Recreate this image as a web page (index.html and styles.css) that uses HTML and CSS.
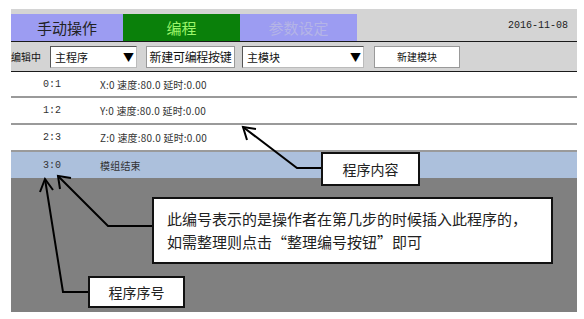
FILE: index.html
```html
<!DOCTYPE html>
<html lang="zh-CN">
<head>
  <meta charset="UTF-8">
  <title>编程</title>
  <link rel="stylesheet" href="styles.css">
</head>
<body>
  <div class="screen">
    <div class="topbar">
      <div class="tab tab-manual">手动操作</div>
      <div class="tab tab-prog">编程</div>
      <div class="tab tab-param">参数设定</div>
      <div class="date">2016-11-08</div>
    </div>
    <div class="toolbar">
      <span class="label">编辑中</span>
      <div class="select sel-main"><span>主程序</span><span class="arrow">▼</span></div>
      <div class="btn btn-key">新建可编程按键</div>
      <div class="select sel-mod"><span>主模块</span><span class="arrow">▼</span></div>
      <div class="btn btn-mod">新建模块</div>
    </div>
    <div class="rows">
      <div class="row"><span class="num">0:1</span><span class="txt">X:0 速度:80.0 延时:0.00</span></div>
      <div class="row"><span class="num">1:2</span><span class="txt">Y:0 速度:80.0 延时:0.00</span></div>
      <div class="row"><span class="num">2:3</span><span class="txt">Z:0 速度:80.0 延时:0.00</span></div>
      <div class="row row-end"><span class="num">3:0</span><span class="txt">模组结束</span></div>
    </div>
    <div class="pane"></div>

    <svg class="arrows" width="566" height="303" viewBox="11 9 566 303">
      <g fill="none" stroke="#000" stroke-width="2" stroke-linejoin="miter">
        <polyline points="321,168 297,168 243,127"/>
        <polyline points="256,129 243,127 247,140"/>
        <polyline points="152,226 108,226 58,176"/>
        <polyline points="71,178 58,176 60,189"/>
        <polyline points="88,292 63,292 45,179"/>
        <polyline points="53,190 45,179 40,192"/>
      </g>
    </svg>
    <div class="note note-content">程序内容</div>
    <div class="note note-big">此编号表示的是操作者在第几步的时候插入此程序的，<br>如需整理则点击“整理编号按钮”即可</div>
    <div class="note note-num">程序序号</div>
  </div>
</body>
</html>
```

FILE: styles.css
```css
body {
  margin: 0;
  padding: 9px 7px 0 11px;
  background: white;
  font-family: 'Noto Sans CJK SC', sans-serif;
}
.screen {
  position: relative;
  width: 566px;
  height: 303px;
  display: flex;
  flex-direction: column;
  background: #808080;
}
.topbar {
  display: flex;
  align-items: flex-end;
  height: 27px;
  padding-top: 5px;
  background: #d4d4d4;
  border-bottom: 1px solid #1a1a1a;
}
.tab {
  height: 27px;
  line-height: 27px;
  text-align: center;
  font-size: 15px;
}
.tab-manual {
  width: 112px;
  background: #9c9cf2;
  color: #222;
}
.tab-prog {
  width: 117px;
  background: #0a800a;
  color: #9cf56a;
}
.tab-param {
  width: 117px;
  background: #9c9cf2;
  color: #b4b4e6;
}
.date {
  margin-left: auto;
  align-self: center;
  padding-right: 9px;
  margin-top: -4px;
  font-family: 'Liberation Mono', monospace;
  font-size: 10px;
  color: #222;
}
.toolbar {
  display: flex;
  align-items: center;
  height: 29px;
  background: #d4d4d4;
  border-bottom: 1px solid #1a1a1a;
  font-size: 11px;
  color: #111;
}
.label {
  width: 31px;
  font-size: 10px;
  white-space: nowrap;
}
.select {
  display: flex;
  align-items: center;
  justify-content: space-between;
  height: 22px;
  box-sizing: border-box;
  padding: 0 2px 0 4px;
  background: white;
  border: 1px solid #bbb;
  border-top-color: #555;
  border-left-color: #555;
  font-size: 11px;
}
.arrow {
  font-size: 11px;
  color: #000;
}
.sel-main {
  width: 87px;
  margin-left: 8px;
}
.sel-mod {
  width: 122px;
  margin-left: 7px;
}
.btn {
  height: 22px;
  line-height: 20px;
  box-sizing: border-box;
  text-align: center;
  background: white;
  border: 1px solid #999;
  font-size: 12px;
}
.btn-key {
  width: 89px;
  margin-left: 9px;
  letter-spacing: -0.3px;
}
.btn-mod {
  width: 86px;
  margin-left: 10px;
  font-size: 10px;
}
.rows {
  background: white;
}
.row {
  display: flex;
  align-items: center;
  height: 25px;
  border-bottom: 2px solid #9a9a9a;
  color: #333;
  font-size: 10px;
}
.row:first-child {
  height: 24px;
}
.row-end {
  height: 26px;
  background: #acc0dc;
  border-bottom: none;
}
.num {
  width: 89px;
  padding-left: 32px;
  box-sizing: border-box;
  font-family: 'Liberation Mono', monospace;
  font-size: 10px;
}
.txt {
  font-size: 10px;
  letter-spacing: 0.2px;
}
.pane {
  flex: 1;
  background: #808080;
}
.arrows {
  position: absolute;
  left: 0;
  top: 0;
}
.note {
  position: absolute;
  box-sizing: border-box;
  background: white;
  border: 2px solid #111;
  color: #222;
}
.note-content {
  left: 310px;
  top: 143px;
  width: 99px;
  height: 34px;
  line-height: 30px;
  text-align: center;
  font-size: 14px;
}
.note-big {
  left: 141px;
  top: 188px;
  width: 401px;
  height: 67px;
  padding: 8px 0 0 13px;
  font-size: 15px;
  line-height: 23px;
}
.note-num {
  left: 77px;
  top: 267px;
  width: 97px;
  height: 32px;
  line-height: 28px;
  text-align: center;
  font-size: 14px;
}
```
